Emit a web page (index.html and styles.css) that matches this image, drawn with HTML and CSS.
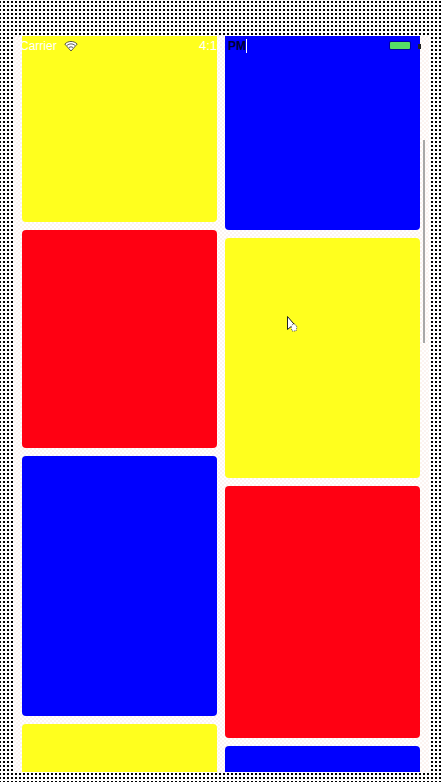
FILE: index.html
```html
<!DOCTYPE html>
<html lang="en">
<head>
    <meta charset="UTF-8">
    <meta name="viewport" content="width=device-width, initial-scale=1.0">
    <title>Tiles</title>
    <link rel="stylesheet" href="styles.css">
</head>
<body>

<div class="screen">
    <div class="grid">
        <div class="column">
            <div class="tile yellow h-198"></div>
            <div class="tile red h-218"></div>
            <div class="tile blue h-260"></div>
            <div class="tile yellow h-120"></div>
        </div>
        <div class="column">
            <div class="tile blue h-206"></div>
            <div class="tile yellow h-240"></div>
            <div class="tile red h-252"></div>
            <div class="tile blue h-120"></div>
        </div>
    </div>

    <!-- Status bar -->
    <div class="status-bar">
        <div class="status-left">
            <span>Carrier</span>
            <svg class="wifi" width="14" height="12" viewBox="0 0 14 12">
                <path d="M0.800 4 C4.500 0.600 9.500 0.600 13.200 4 L7 11 Z" fill="#fff" stroke="#333" stroke-width="0.800"/>
                <path d="M3 5.400 C5.500 3.400 8.500 3.400 11 5.400 M5 7.600 C6.200 6.600 7.800 6.600 9 7.600" fill="none" stroke="#333" stroke-width="0.800"/>
            </svg>
        </div>
        <div class="status-time"><span class="time-light">4:10</span> <span class="time-dark">PM</span></div>
        <div class="status-right">
            <div class="battery"></div>
            <span class="charge"></span>
        </div>
    </div>

    <div class="scrollbar"></div>

    <svg class="cursor" width="11" height="16" viewBox="0 0 11 16">
        <path d="M0.500 0.500 V13.500 L3.500 11 H9.500 Z" fill="#fff" stroke="#222" stroke-width="1"/>
        <path d="M4 11 L5 15 H9 L10 11 L8 8 H6 Z" fill="#fff" stroke="#555" stroke-width="1" stroke-dasharray="1 1"/>
    </svg>
</div>

</body>
</html>
```

FILE: styles.css
```css
html, body {
    height: 100%;
}

body {
    margin: 0;
    padding: 36px 13px 10px 14px;
    box-sizing: border-box;
    overflow: hidden;
    font-family: 'Liberation Sans', Arial, sans-serif;
    background-color: #fff;
    background-image: conic-gradient(#000 25%, #fff 25%);
    background-size: 4px 4px;
    background-position: 1px 1px;
}

.screen {
    position: relative;
    height: 736px;
    overflow: hidden;
    background-color: #fdf6f4;
    background-image: conic-gradient(#fff 25%, #fcf3f0 25% 50%, #fff 50% 75%, #fcf3f0 75%);
    background-size: 4px 4px;
}

.grid {
    display: flex;
    gap: 8px;
    padding: 0 9px 0 8px;
    margin-top: -12px;
}

.column {
    flex: 1;
    display: flex;
    flex-direction: column;
    gap: 8px;
}

.tile {
    border-radius: 4px;
}

.yellow {
    background-color: #ffff1e;
}

.red {
    background-color: #ff0012;
}

.blue {
    background-color: #0000ff;
}

.h-120 { height: 120px; }
.h-198 { height: 198px; }
.h-206 { height: 206px; }
.h-218 { height: 218px; }
.h-240 { height: 240px; }
.h-252 { height: 252px; }
.h-260 { height: 260px; }

.status-bar {
    position: absolute;
    top: 0;
    left: 0;
    right: 0;
    height: 20px;
    font-size: 12px;
    line-height: 20px;
}

.status-left {
    position: absolute;
    left: 6px;
    top: 0;
    display: flex;
    align-items: center;
    gap: 7px;
    color: #fff;
}

.status-time {
    position: absolute;
    left: 185px;
    top: 0;
    font-size: 13px;
    white-space: nowrap;
}

.time-light {
    color: #fff;
}

.time-dark {
    font-size: 12px;
    font-weight: bold;
    color: #000030;
    border-right: 1px solid #fff;
}

.battery {
    position: absolute;
    left: 376px;
    top: 6px;
    width: 20px;
    height: 7px;
    border-radius: 1px;
    background-color: #55dd66;
    box-shadow: 0 0 0 1px #0000a0;
}

.charge {
    position: absolute;
    left: 404px;
    top: 8px;
    width: 3px;
    height: 5px;
    background-color: #222;
}

.scrollbar {
    position: absolute;
    left: 409px;
    top: 104px;
    width: 2px;
    height: 203px;
    background-color: #a8a8a8;
}

.cursor {
    position: absolute;
    left: 273px;
    top: 280px;
}
```
